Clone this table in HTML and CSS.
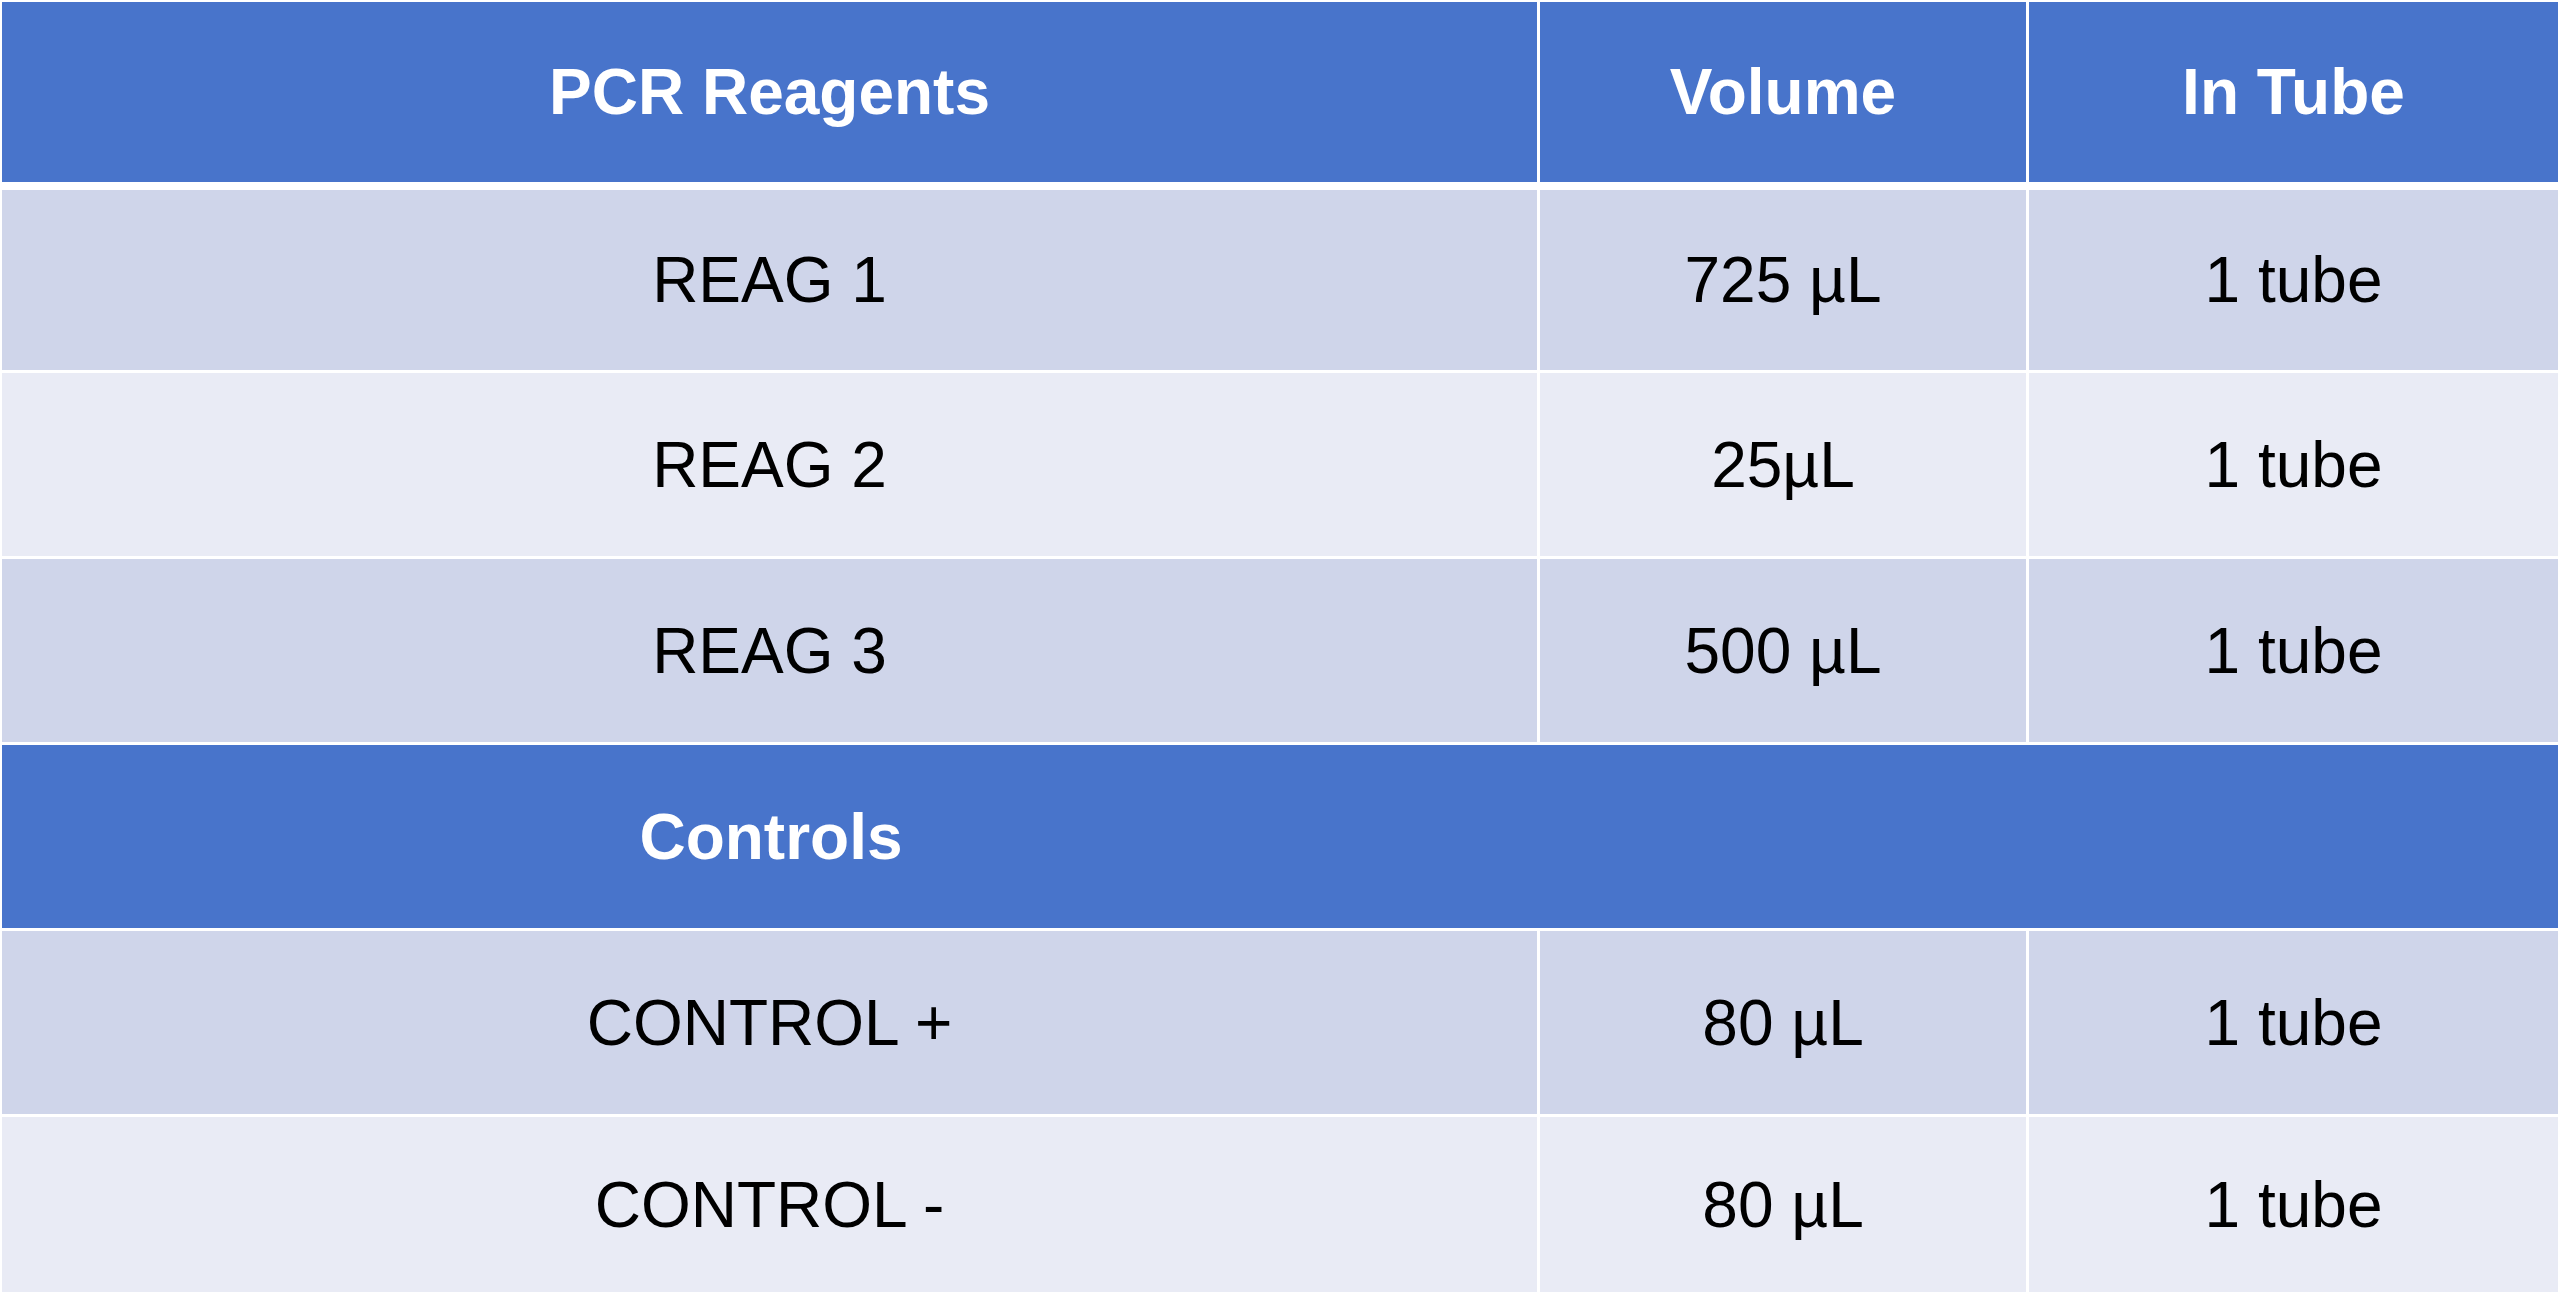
FILE: index.html
```html
<!DOCTYPE html>
<html lang="en">
<head>
<meta charset="utf-8">
<title>PCR Reagents</title>
<link rel="stylesheet" href="styles.css">
</head>
<body>
<div class="table">
  <div class="row head">
    <div class="cell">PCR Reagents</div>
    <div class="cell">Volume</div>
    <div class="cell">In Tube</div>
  </div>
  <div class="row odd first">
    <div class="cell">REAG 1</div>
    <div class="cell">725 µL</div>
    <div class="cell">1 tube</div>
  </div>
  <div class="row even">
    <div class="cell">REAG 2</div>
    <div class="cell">25µL</div>
    <div class="cell">1 tube</div>
  </div>
  <div class="row odd">
    <div class="cell">REAG 3</div>
    <div class="cell">500 µL</div>
    <div class="cell">1 tube</div>
  </div>
  <div class="row section">
    <div class="cell">Controls</div>
    <div class="cell"></div>
    <div class="cell"></div>
  </div>
  <div class="row odd">
    <div class="cell">CONTROL +</div>
    <div class="cell">80 µL</div>
    <div class="cell">1 tube</div>
  </div>
  <div class="row even last">
    <div class="cell">CONTROL -</div>
    <div class="cell">80 µL</div>
    <div class="cell">1 tube</div>
  </div>
</div>
</body>
</html>
```

FILE: styles.css
```css
html, body {
  margin: 0;
  padding: 0;
  background: #ffffff;
  overflow: hidden;
}

body {
  font-family: "Liberation Sans", Arial, sans-serif;
  height: 1292px;
}

.table {
  display: flex;
  flex-direction: column;
  gap: 3px;
  padding: 2px 2px 0 2px;
}

.row {
  display: grid;
  grid-template-columns: 1535px 486px 1fr;
  column-gap: 3px;
  height: 183px;
}

.cell {
  display: flex;
  align-items: center;
  justify-content: center;
  font-size: 64px;
  color: #000000;
  white-space: nowrap;
}

.head {
  height: 180px;
  margin-bottom: 5px;
}

.head .cell,
.section .cell {
  background: #4874cb;
  color: #ffffff;
  font-weight: bold;
}

.section {
  grid-template-columns: 1538px 489px 1fr;
  column-gap: 0;
}

.first {
  height: 180px;
}

.odd .cell {
  background: #cfd5ea;
}

.even .cell {
  background: #e9ebf5;
}

.last {
  height: 175px;
}
```
